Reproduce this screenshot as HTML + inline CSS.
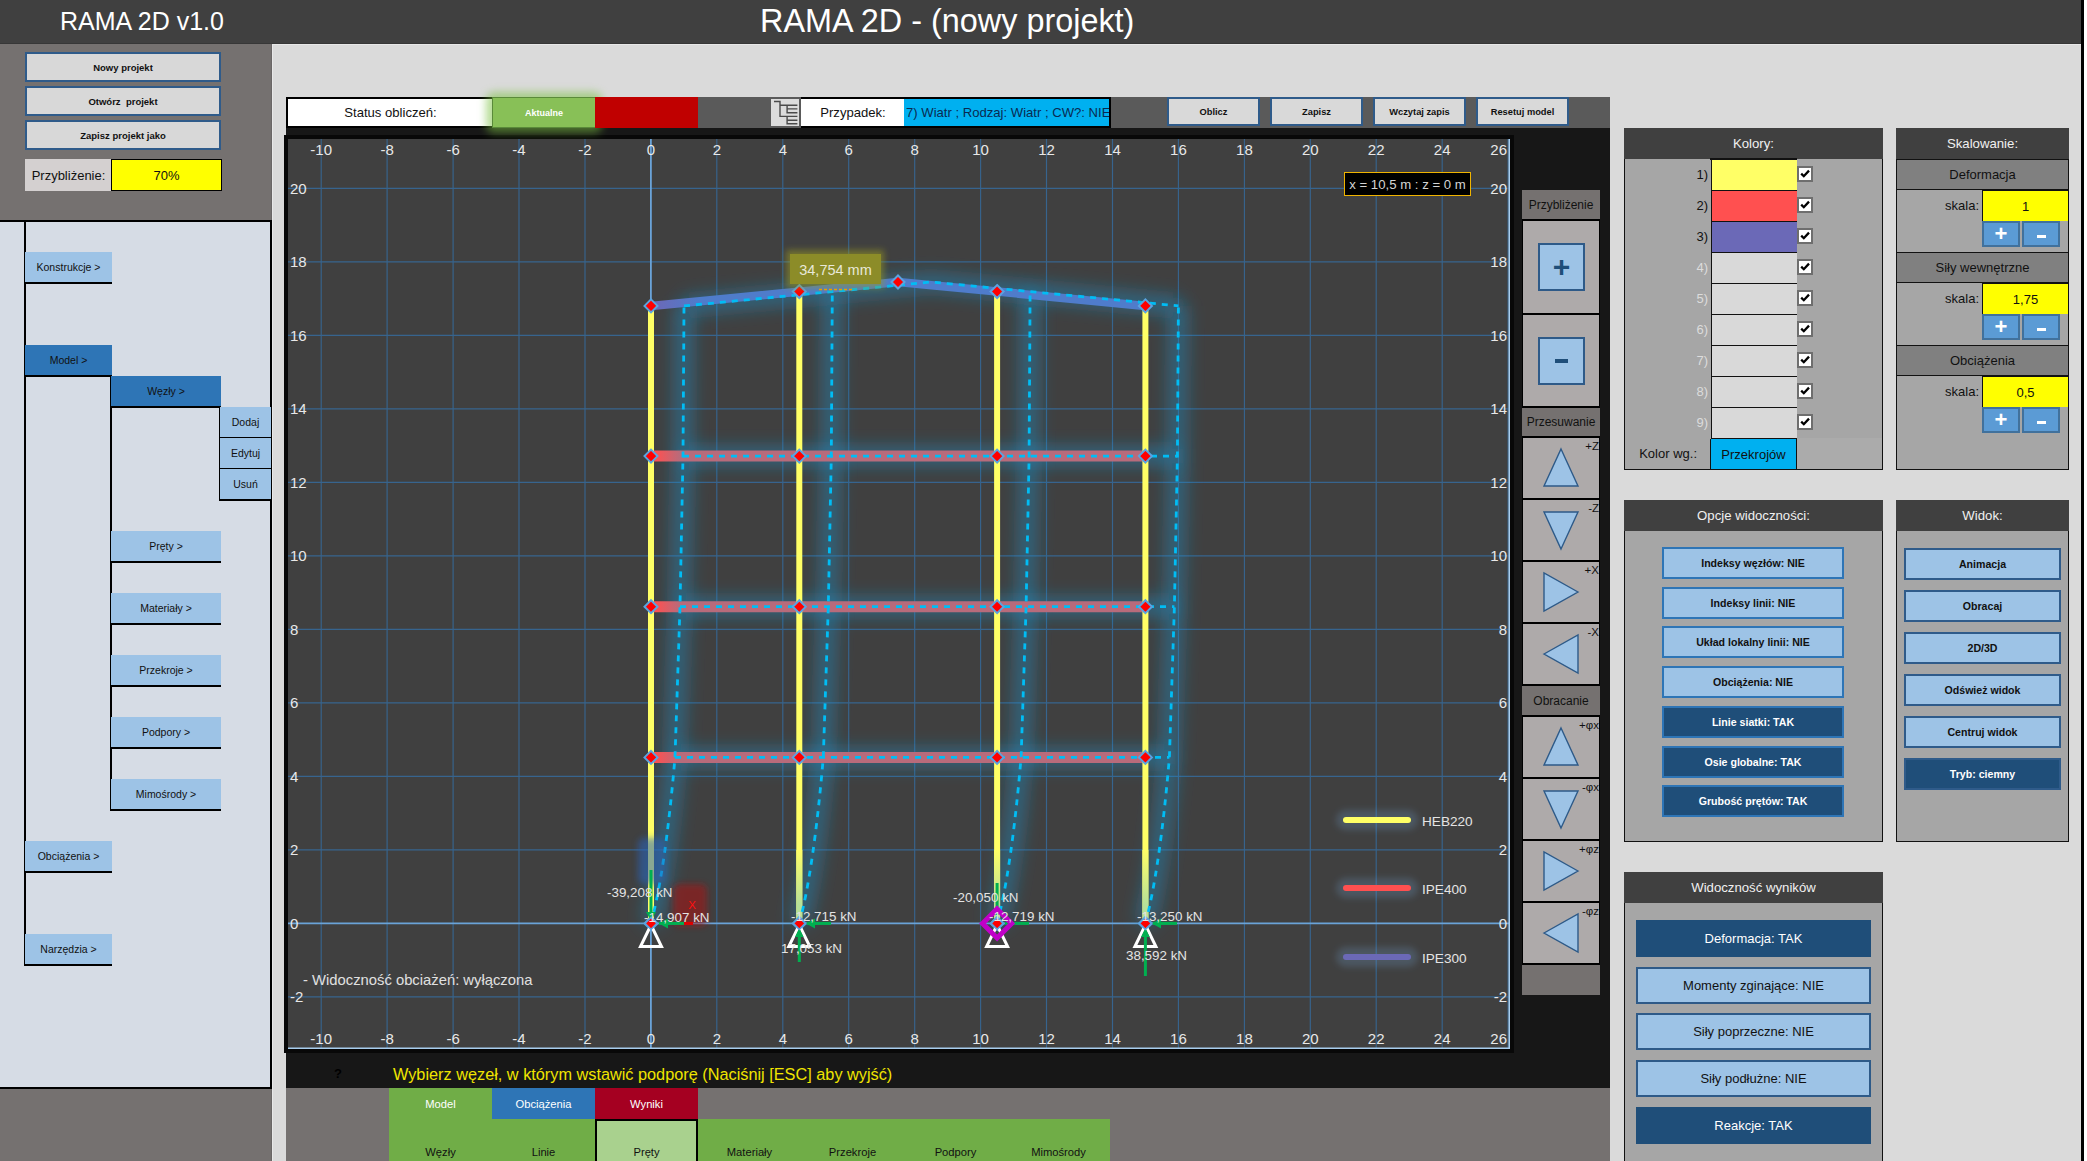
<!DOCTYPE html>
<html><head><meta charset="utf-8">
<style>
*{box-sizing:border-box;margin:0;padding:0}
html,body{width:2087px;height:1161px;overflow:hidden;background:#fff;font-family:"Liberation Sans",sans-serif}
.a{position:absolute}
.c{display:flex;align-items:center;justify-content:center;white-space:nowrap}
#hdr{left:0;top:0;width:2081px;height:44px;background:#404040;border-bottom:1px solid #373737}
#rstrip{left:2081px;top:0;width:3px;height:1161px;background:#000}
#main{left:272px;top:44px;width:1809px;height:1117px;background:#dadada;border-left:1px solid #e8e8e8;border-top:1px solid #e8e8e8}
#lp{left:0;top:44px;width:272px;height:1117px;background:#757170;border-right:1px solid #6a6666}
.lbtn{left:25px;width:196px;height:30px;background:#d8d8d8;border:2px solid #2f5b8a;font-size:9.5px;font-weight:700;color:#111}
#menu{left:0;top:220px;width:272px;height:869px;background:#d6dce5;border:2px solid #000;border-left:none}
.mi{background:#9dc3e6;font-size:10.5px;color:#111;border-bottom:2px solid #000;height:32px}
.mi.on{background:#2e75b6}
.vl{background:#000;width:2px}

.tbtn{top:97px;width:93px;height:29px;background:#d9d9d9;border:2px solid #2f5b8a;font-size:9.3px;font-weight:700;color:#111}
.nh{left:1522px;width:78px;background:#757170;font-size:12px;color:#111}
.nc{left:1523px;width:76px;background:#aeaaaa}
.pm{left:1538px;width:47px;height:48px;background:#9dc3e6;border:2px solid #2e5a88;font-size:30px;font-weight:700;color:#1f4e79;line-height:48px}
.tab{height:31px;font-size:11.2px;color:#fff}
.tab2{top:1143px;width:103px;text-align:center;font-size:11.2px;color:#111;line-height:18px}
.pnl{background:#a6a6a6;border:1.5px solid #111}
.ph{background:#404040;color:#f0f0f0;font-size:13.2px}
.chk{left:1797px;width:16px;height:16px;background:#fff;border:2px solid #6e6e6e}
.sh{left:1897px;width:171px;height:31px;background:#808080;font-size:13px;color:#111;border-bottom:1.5px solid #111;border-top:1.5px solid #111}
.sb{width:38px;height:26px;background:#5b9bd5;border:2px solid #41719c;color:#fff;font-size:22px;font-weight:700;line-height:26px}
.ob{height:32px;background:#9dc3e6;border:2px solid #2e75b6;font-size:10.6px;font-weight:700;color:#111}
.ob.dk{background:#1f4e79;color:#fff}
.ob.w{border-color:#2f5b8a}
.rb{left:1636px;width:235px;height:37px;background:#9dc3e6;border:2px solid #2e5a88;font-size:13px;color:#111}
.rb.dk{background:#1f4e79;border-color:#1f4e79;color:#fff}
</style></head><body>
<div id="hdr" class="a"></div>
<div class="a" style="left:60px;top:4px;width:166px;height:34px;color:#fff;font-size:25px;line-height:34px;white-space:nowrap">RAMA 2D v1.0</div>
<div class="a" style="left:760px;top:1px;width:378px;height:40px;color:#fff;font-size:32.4px;line-height:40px;white-space:nowrap">RAMA 2D - (nowy projekt)</div>
<div id="rstrip" class="a"></div>
<div id="lp" class="a"></div>
<div id="main" class="a"></div>

<!-- left panel buttons -->
<div class="a c lbtn" style="top:52px">Nowy projekt</div>
<div class="a c lbtn" style="top:86px">Otwórz&nbsp; projekt</div>
<div class="a c lbtn" style="top:120px">Zapisz projekt jako</div>
<div class="a c" style="left:25px;top:159px;width:87px;height:32px;background:#d4d0d0;font-size:13px;color:#111">Przybliżenie:</div>
<div class="a c" style="left:111px;top:159px;width:111px;height:32px;background:#ffff00;border:1px solid #000;font-size:13px;color:#111">70%</div>

<!-- left menu -->
<div id="menu" class="a"></div>
<div class="a vl" style="left:24px;top:222px;height:744px"></div>
<div class="a c mi" style="left:25px;top:252px;width:87px">Konstrukcje &gt;</div>
<div class="a c mi on" style="left:25px;top:345px;width:87px">Model &gt;</div>
<div class="a vl" style="left:110px;top:376px;height:435px"></div>
<div class="a c mi on" style="left:111px;top:376px;width:110px">Węzły &gt;</div>
<div class="a vl" style="left:219px;top:407px;height:94px"></div>
<div class="a c mi" style="left:220px;top:407px;width:51px;height:32px">Dodaj</div>
<div class="a c mi" style="left:220px;top:438px;width:51px;height:32px">Edytuj</div>
<div class="a c mi" style="left:220px;top:469px;width:51px;height:32px">Usuń</div>
<div class="a c mi" style="left:111px;top:531px;width:110px">Pręty &gt;</div>
<div class="a c mi" style="left:111px;top:593px;width:110px">Materiały &gt;</div>
<div class="a c mi" style="left:111px;top:655px;width:110px">Przekroje &gt;</div>
<div class="a c mi" style="left:111px;top:717px;width:110px">Podpory &gt;</div>
<div class="a c mi" style="left:111px;top:779px;width:110px">Mimośrody &gt;</div>
<div class="a c mi" style="left:25px;top:841px;width:87px">Obciążenia &gt;</div>
<div class="a c mi" style="left:25px;top:934px;width:87px">Narzędzia &gt;</div>

<!-- dark work area -->
<div class="a" style="left:286px;top:128px;width:1324px;height:961px;background:#171717"></div>
<div class="a" style="left:284px;top:135px;width:1230px;height:918px;background:#080808"></div>
<!-- toolbar -->
<div class="a" style="left:698px;top:97px;width:912px;height:31px;background:#5a5a5a"></div>
<div class="a c" style="left:286px;top:97px;width:207px;height:31px;background:#fff;border:2px solid #000;border-right:none;font-size:13.1px;color:#111">Status obliczeń:</div>
<div class="a" style="left:486px;top:92px;width:116px;height:41px;background:#7ac040;opacity:.55;filter:blur(4px);border-radius:8px"></div>
<div class="a c" style="left:492px;top:97px;width:104px;height:31px;background:#88c057;border:1px solid #5a8a3a;font-size:9px;font-weight:700;color:#fff">Aktualne</div>
<div class="a" style="left:595px;top:97px;width:103px;height:31px;background:#c00000"></div>
<!-- tree icon -->
<div class="a" style="left:771px;top:99px;width:28px;height:27px;background:#dcdcdc"></div>
<svg class="a" style="left:771px;top:98px" width="30" height="30" viewBox="0 0 30 30">
<path d="M3,3.5 H9 V18.4 H26.4 M9,7.3 H26.4 M16.1,7.3 V14.7 H26.4 M16.1,10.9 H26.4 M16.1,18.4 V25.8 H26.4 M16.1,22.2 H26.4" fill="none" stroke="#4a4a4a" stroke-width="1.4"/>
</svg>
<div class="a c" style="left:801px;top:97px;width:104px;height:31px;background:#fff;border-top:2px solid #000;border-bottom:2px solid #000;font-size:13.1px;color:#111">Przypadek:</div>
<div class="a" style="left:904px;top:97px;width:207px;height:31px;background:#00b0f0;border:2px solid #000;border-left:none;overflow:hidden;white-space:nowrap;font-size:13.1px;line-height:27px;color:#0a2a50;padding-left:2px">7) Wiatr ; Rodzaj: Wiatr ; CW?: NIE</div>
<div class="a c tbtn" style="left:1167px">Oblicz</div>
<div class="a c tbtn" style="left:1270px">Zapisz</div>
<div class="a c tbtn" style="left:1373px">Wczytaj zapis</div>
<div class="a c tbtn" style="left:1476px">Resetuj model</div>

<svg class="a" style="left:288px;top:139px" width="1222" height="910" viewBox="288 139 1222 910">
<defs><filter id="gl" filterUnits="userSpaceOnUse" x="288" y="139" width="1222" height="910"><feGaussianBlur stdDeviation="9"/></filter><filter id="gl2" filterUnits="userSpaceOnUse" x="288" y="139" width="1222" height="910"><feGaussianBlur stdDeviation="3"/></filter><linearGradient id="rg" gradientUnits="userSpaceOnUse" x1="655" x2="680" y1="0" y2="0"><stop offset="0" stop-color="#ff5050"/><stop offset="1" stop-color="#b86b7b"/></linearGradient><linearGradient id="pg" gradientUnits="userSpaceOnUse" x1="655" x2="700" y1="0" y2="0"><stop offset="0" stop-color="#6b69b7"/><stop offset="1" stop-color="#4f7ccb"/></linearGradient><linearGradient id="cg" gradientUnits="userSpaceOnUse" x1="0" x2="0" y1="850" y2="905"><stop offset="0" stop-color="#ffff66"/><stop offset="1" stop-color="#b6e09a"/></linearGradient></defs>
<rect x="288" y="139" width="1222" height="910" fill="#404040"/>
<line x1="321.2" y1="139" x2="321.2" y2="1049" stroke="#37648e" stroke-width="1.15"/>
<line x1="387.1" y1="139" x2="387.1" y2="1049" stroke="#37648e" stroke-width="1.15"/>
<line x1="453.1" y1="139" x2="453.1" y2="1049" stroke="#37648e" stroke-width="1.15"/>
<line x1="519.0" y1="139" x2="519.0" y2="1049" stroke="#37648e" stroke-width="1.15"/>
<line x1="585.0" y1="139" x2="585.0" y2="1049" stroke="#37648e" stroke-width="1.15"/>
<line x1="716.8" y1="139" x2="716.8" y2="1049" stroke="#37648e" stroke-width="1.15"/>
<line x1="782.8" y1="139" x2="782.8" y2="1049" stroke="#37648e" stroke-width="1.15"/>
<line x1="848.7" y1="139" x2="848.7" y2="1049" stroke="#37648e" stroke-width="1.15"/>
<line x1="914.7" y1="139" x2="914.7" y2="1049" stroke="#37648e" stroke-width="1.15"/>
<line x1="980.6" y1="139" x2="980.6" y2="1049" stroke="#37648e" stroke-width="1.15"/>
<line x1="1046.5" y1="139" x2="1046.5" y2="1049" stroke="#37648e" stroke-width="1.15"/>
<line x1="1112.5" y1="139" x2="1112.5" y2="1049" stroke="#37648e" stroke-width="1.15"/>
<line x1="1178.4" y1="139" x2="1178.4" y2="1049" stroke="#37648e" stroke-width="1.15"/>
<line x1="1244.4" y1="139" x2="1244.4" y2="1049" stroke="#37648e" stroke-width="1.15"/>
<line x1="1310.3" y1="139" x2="1310.3" y2="1049" stroke="#37648e" stroke-width="1.15"/>
<line x1="1376.2" y1="139" x2="1376.2" y2="1049" stroke="#37648e" stroke-width="1.15"/>
<line x1="1442.2" y1="139" x2="1442.2" y2="1049" stroke="#37648e" stroke-width="1.15"/>
<line x1="1508.1" y1="139" x2="1508.1" y2="1049" stroke="#37648e" stroke-width="1.15"/>
<line x1="288" y1="996.9" x2="1510" y2="996.9" stroke="#37648e" stroke-width="1.15"/>
<line x1="288" y1="849.9" x2="1510" y2="849.9" stroke="#37648e" stroke-width="1.15"/>
<line x1="288" y1="776.4" x2="1510" y2="776.4" stroke="#37648e" stroke-width="1.15"/>
<line x1="288" y1="702.9" x2="1510" y2="702.9" stroke="#37648e" stroke-width="1.15"/>
<line x1="288" y1="629.4" x2="1510" y2="629.4" stroke="#37648e" stroke-width="1.15"/>
<line x1="288" y1="555.9" x2="1510" y2="555.9" stroke="#37648e" stroke-width="1.15"/>
<line x1="288" y1="482.4" x2="1510" y2="482.4" stroke="#37648e" stroke-width="1.15"/>
<line x1="288" y1="408.9" x2="1510" y2="408.9" stroke="#37648e" stroke-width="1.15"/>
<line x1="288" y1="335.4" x2="1510" y2="335.4" stroke="#37648e" stroke-width="1.15"/>
<line x1="288" y1="261.9" x2="1510" y2="261.9" stroke="#37648e" stroke-width="1.15"/>
<line x1="288" y1="188.4" x2="1510" y2="188.4" stroke="#37648e" stroke-width="1.15"/>
<line x1="650.9" y1="139" x2="650.9" y2="1049" stroke="#6aa3d8" stroke-width="1.8"/>
<line x1="288" y1="923.4" x2="1510" y2="923.4" stroke="#6aa3d8" stroke-width="1.8"/>
<text x="321.2" y="154.5" font-family="Liberation Sans" font-size="15" fill="#e8e8e8" text-anchor="middle">-10</text>
<text x="321.2" y="1043.5" font-family="Liberation Sans" font-size="15" fill="#e8e8e8" text-anchor="middle">-10</text>
<text x="387.1" y="154.5" font-family="Liberation Sans" font-size="15" fill="#e8e8e8" text-anchor="middle">-8</text>
<text x="387.1" y="1043.5" font-family="Liberation Sans" font-size="15" fill="#e8e8e8" text-anchor="middle">-8</text>
<text x="453.1" y="154.5" font-family="Liberation Sans" font-size="15" fill="#e8e8e8" text-anchor="middle">-6</text>
<text x="453.1" y="1043.5" font-family="Liberation Sans" font-size="15" fill="#e8e8e8" text-anchor="middle">-6</text>
<text x="519.0" y="154.5" font-family="Liberation Sans" font-size="15" fill="#e8e8e8" text-anchor="middle">-4</text>
<text x="519.0" y="1043.5" font-family="Liberation Sans" font-size="15" fill="#e8e8e8" text-anchor="middle">-4</text>
<text x="585.0" y="154.5" font-family="Liberation Sans" font-size="15" fill="#e8e8e8" text-anchor="middle">-2</text>
<text x="585.0" y="1043.5" font-family="Liberation Sans" font-size="15" fill="#e8e8e8" text-anchor="middle">-2</text>
<text x="650.9" y="154.5" font-family="Liberation Sans" font-size="15" fill="#e8e8e8" text-anchor="middle">0</text>
<text x="650.9" y="1043.5" font-family="Liberation Sans" font-size="15" fill="#e8e8e8" text-anchor="middle">0</text>
<text x="716.8" y="154.5" font-family="Liberation Sans" font-size="15" fill="#e8e8e8" text-anchor="middle">2</text>
<text x="716.8" y="1043.5" font-family="Liberation Sans" font-size="15" fill="#e8e8e8" text-anchor="middle">2</text>
<text x="782.8" y="154.5" font-family="Liberation Sans" font-size="15" fill="#e8e8e8" text-anchor="middle">4</text>
<text x="782.8" y="1043.5" font-family="Liberation Sans" font-size="15" fill="#e8e8e8" text-anchor="middle">4</text>
<text x="848.7" y="154.5" font-family="Liberation Sans" font-size="15" fill="#e8e8e8" text-anchor="middle">6</text>
<text x="848.7" y="1043.5" font-family="Liberation Sans" font-size="15" fill="#e8e8e8" text-anchor="middle">6</text>
<text x="914.7" y="154.5" font-family="Liberation Sans" font-size="15" fill="#e8e8e8" text-anchor="middle">8</text>
<text x="914.7" y="1043.5" font-family="Liberation Sans" font-size="15" fill="#e8e8e8" text-anchor="middle">8</text>
<text x="980.6" y="154.5" font-family="Liberation Sans" font-size="15" fill="#e8e8e8" text-anchor="middle">10</text>
<text x="980.6" y="1043.5" font-family="Liberation Sans" font-size="15" fill="#e8e8e8" text-anchor="middle">10</text>
<text x="1046.5" y="154.5" font-family="Liberation Sans" font-size="15" fill="#e8e8e8" text-anchor="middle">12</text>
<text x="1046.5" y="1043.5" font-family="Liberation Sans" font-size="15" fill="#e8e8e8" text-anchor="middle">12</text>
<text x="1112.5" y="154.5" font-family="Liberation Sans" font-size="15" fill="#e8e8e8" text-anchor="middle">14</text>
<text x="1112.5" y="1043.5" font-family="Liberation Sans" font-size="15" fill="#e8e8e8" text-anchor="middle">14</text>
<text x="1178.4" y="154.5" font-family="Liberation Sans" font-size="15" fill="#e8e8e8" text-anchor="middle">16</text>
<text x="1178.4" y="1043.5" font-family="Liberation Sans" font-size="15" fill="#e8e8e8" text-anchor="middle">16</text>
<text x="1244.4" y="154.5" font-family="Liberation Sans" font-size="15" fill="#e8e8e8" text-anchor="middle">18</text>
<text x="1244.4" y="1043.5" font-family="Liberation Sans" font-size="15" fill="#e8e8e8" text-anchor="middle">18</text>
<text x="1310.3" y="154.5" font-family="Liberation Sans" font-size="15" fill="#e8e8e8" text-anchor="middle">20</text>
<text x="1310.3" y="1043.5" font-family="Liberation Sans" font-size="15" fill="#e8e8e8" text-anchor="middle">20</text>
<text x="1376.2" y="154.5" font-family="Liberation Sans" font-size="15" fill="#e8e8e8" text-anchor="middle">22</text>
<text x="1376.2" y="1043.5" font-family="Liberation Sans" font-size="15" fill="#e8e8e8" text-anchor="middle">22</text>
<text x="1442.2" y="154.5" font-family="Liberation Sans" font-size="15" fill="#e8e8e8" text-anchor="middle">24</text>
<text x="1442.2" y="1043.5" font-family="Liberation Sans" font-size="15" fill="#e8e8e8" text-anchor="middle">24</text>
<text x="1507" y="154.5" font-family="Liberation Sans" font-size="15" fill="#e8e8e8" text-anchor="end">26</text>
<text x="1507" y="1043.5" font-family="Liberation Sans" font-size="15" fill="#e8e8e8" text-anchor="end">26</text>
<text x="290" y="1002.4" font-family="Liberation Sans" font-size="15" fill="#e8e8e8">-2</text>
<text x="1507" y="1002.4" font-family="Liberation Sans" font-size="15" fill="#e8e8e8" text-anchor="end">-2</text>
<text x="290" y="928.9" font-family="Liberation Sans" font-size="15" fill="#e8e8e8">0</text>
<text x="1507" y="928.9" font-family="Liberation Sans" font-size="15" fill="#e8e8e8" text-anchor="end">0</text>
<text x="290" y="855.4" font-family="Liberation Sans" font-size="15" fill="#e8e8e8">2</text>
<text x="1507" y="855.4" font-family="Liberation Sans" font-size="15" fill="#e8e8e8" text-anchor="end">2</text>
<text x="290" y="781.9" font-family="Liberation Sans" font-size="15" fill="#e8e8e8">4</text>
<text x="1507" y="781.9" font-family="Liberation Sans" font-size="15" fill="#e8e8e8" text-anchor="end">4</text>
<text x="290" y="708.4" font-family="Liberation Sans" font-size="15" fill="#e8e8e8">6</text>
<text x="1507" y="708.4" font-family="Liberation Sans" font-size="15" fill="#e8e8e8" text-anchor="end">6</text>
<text x="290" y="634.9" font-family="Liberation Sans" font-size="15" fill="#e8e8e8">8</text>
<text x="1507" y="634.9" font-family="Liberation Sans" font-size="15" fill="#e8e8e8" text-anchor="end">8</text>
<text x="290" y="561.4" font-family="Liberation Sans" font-size="15" fill="#e8e8e8">10</text>
<text x="1507" y="561.4" font-family="Liberation Sans" font-size="15" fill="#e8e8e8" text-anchor="end">10</text>
<text x="290" y="487.9" font-family="Liberation Sans" font-size="15" fill="#e8e8e8">12</text>
<text x="1507" y="487.9" font-family="Liberation Sans" font-size="15" fill="#e8e8e8" text-anchor="end">12</text>
<text x="290" y="414.4" font-family="Liberation Sans" font-size="15" fill="#e8e8e8">14</text>
<text x="1507" y="414.4" font-family="Liberation Sans" font-size="15" fill="#e8e8e8" text-anchor="end">14</text>
<text x="290" y="340.9" font-family="Liberation Sans" font-size="15" fill="#e8e8e8">16</text>
<text x="1507" y="340.9" font-family="Liberation Sans" font-size="15" fill="#e8e8e8" text-anchor="end">16</text>
<text x="290" y="267.4" font-family="Liberation Sans" font-size="15" fill="#e8e8e8">18</text>
<text x="1507" y="267.4" font-family="Liberation Sans" font-size="15" fill="#e8e8e8" text-anchor="end">18</text>
<text x="290" y="193.9" font-family="Liberation Sans" font-size="15" fill="#e8e8e8">20</text>
<text x="1507" y="193.9" font-family="Liberation Sans" font-size="15" fill="#e8e8e8" text-anchor="end">20</text>
<path d="M651,923.4 Q665.3,870.2 675,757.4 L680,606.7 L683,456.1 L684,305.9" fill="none" stroke="#1c90c8" stroke-width="16" stroke-opacity="0.55" filter="url(#gl)"/>
<path d="M799.3,923.4 Q813.5999999999999,870.2 823.3,757.4 L828.3,606.7 L831.3,456.1 L832.3,291.6" fill="none" stroke="#1c90c8" stroke-width="16" stroke-opacity="0.55" filter="url(#gl)"/>
<path d="M997.1,923.4 Q1011.4,870.2 1021.1,757.4 L1026.1,606.7 L1029.1,456.1 L1030.1,291.6" fill="none" stroke="#1c90c8" stroke-width="16" stroke-opacity="0.55" filter="url(#gl)"/>
<path d="M1145.4,923.4 Q1159.7,870.2 1169.4,757.4 L1174.4,606.7 L1177.4,456.1 L1178.4,305.9" fill="none" stroke="#1c90c8" stroke-width="16" stroke-opacity="0.55" filter="url(#gl)"/>
<path d="M675,757.4 L1169.4,757.4" fill="none" stroke="#1c90c8" stroke-width="16" stroke-opacity="0.55" filter="url(#gl)"/>
<path d="M680,606.7 L1174.4,606.7" fill="none" stroke="#1c90c8" stroke-width="16" stroke-opacity="0.55" filter="url(#gl)"/>
<path d="M683,456.1 L1177.4,456.1" fill="none" stroke="#1c90c8" stroke-width="16" stroke-opacity="0.55" filter="url(#gl)"/>
<path d="M684,305.9 L832.3,291.6 L931,282 L1030.1,291.6 L1178.4,305.9" fill="none" stroke="#1c90c8" stroke-width="16" stroke-opacity="0.55" filter="url(#gl)"/>
<path d="M651,305.9 L898,282 L1145.4,305.9" fill="none" stroke="url(#pg)" stroke-width="8.5"/>
<line x1="651" y1="757.4" x2="1145.4" y2="757.4" stroke="url(#rg)" stroke-width="11"/>
<line x1="651" y1="606.7" x2="1145.4" y2="606.7" stroke="url(#rg)" stroke-width="11"/>
<line x1="651" y1="456.1" x2="1145.4" y2="456.1" stroke="url(#rg)" stroke-width="11"/>
<line x1="651" y1="923.4" x2="651" y2="305.9" stroke="#ffff66" stroke-width="6"/>
<line x1="799.3" y1="923.4" x2="799.3" y2="291.6" stroke="#ffff66" stroke-width="6"/>
<line x1="799.3" y1="918" x2="799.3" y2="850" stroke="url(#cg)" stroke-width="6"/>
<line x1="997.1" y1="923.4" x2="997.1" y2="291.6" stroke="#ffff66" stroke-width="6"/>
<line x1="997.1" y1="918" x2="997.1" y2="850" stroke="url(#cg)" stroke-width="6"/>
<line x1="1145.4" y1="923.4" x2="1145.4" y2="305.9" stroke="#ffff66" stroke-width="6"/>
<line x1="1145.4" y1="918" x2="1145.4" y2="850" stroke="url(#cg)" stroke-width="6"/>
<path d="M651,923.4 Q665.3,870.2 675,757.4 L680,606.7 L683,456.1 L684,305.9" fill="none" stroke="#00bdf5" stroke-width="2.8" stroke-dasharray="6 6"/>
<path d="M799.3,923.4 Q813.5999999999999,870.2 823.3,757.4 L828.3,606.7 L831.3,456.1 L832.3,291.6" fill="none" stroke="#00bdf5" stroke-width="2.8" stroke-dasharray="6 6"/>
<path d="M997.1,923.4 Q1011.4,870.2 1021.1,757.4 L1026.1,606.7 L1029.1,456.1 L1030.1,291.6" fill="none" stroke="#00bdf5" stroke-width="2.8" stroke-dasharray="6 6"/>
<path d="M1145.4,923.4 Q1159.7,870.2 1169.4,757.4 L1174.4,606.7 L1177.4,456.1 L1178.4,305.9" fill="none" stroke="#00bdf5" stroke-width="2.8" stroke-dasharray="6 6"/>
<path d="M675,757.4 L1169.4,757.4" fill="none" stroke="#00bdf5" stroke-width="2.8" stroke-dasharray="6 6"/>
<path d="M680,606.7 L1174.4,606.7" fill="none" stroke="#00bdf5" stroke-width="2.8" stroke-dasharray="6 6"/>
<path d="M683,456.1 L1177.4,456.1" fill="none" stroke="#00bdf5" stroke-width="2.8" stroke-dasharray="6 6"/>
<path d="M684,305.9 L832.3,291.6 L931,282 L1030.1,291.6 L1178.4,305.9" fill="none" stroke="#00bdf5" stroke-width="2.8" stroke-dasharray="6 6"/>
<path d="M651,916.9 L657.5,923.4 L651,929.9 L644.5,923.4 Z" fill="#ff0000" stroke="#5ba3e0" stroke-width="2"/>
<path d="M651,750.9 L657.5,757.4 L651,763.9 L644.5,757.4 Z" fill="#ff0000" stroke="#5ba3e0" stroke-width="2"/>
<path d="M651,600.2 L657.5,606.7 L651,613.2 L644.5,606.7 Z" fill="#ff0000" stroke="#5ba3e0" stroke-width="2"/>
<path d="M651,449.6 L657.5,456.1 L651,462.6 L644.5,456.1 Z" fill="#ff0000" stroke="#5ba3e0" stroke-width="2"/>
<path d="M651,299.4 L657.5,305.9 L651,312.4 L644.5,305.9 Z" fill="#ff0000" stroke="#5ba3e0" stroke-width="2"/>
<path d="M799.3,916.9 L805.8,923.4 L799.3,929.9 L792.8,923.4 Z" fill="#ff0000" stroke="#5ba3e0" stroke-width="2"/>
<path d="M799.3,750.9 L805.8,757.4 L799.3,763.9 L792.8,757.4 Z" fill="#ff0000" stroke="#5ba3e0" stroke-width="2"/>
<path d="M799.3,600.2 L805.8,606.7 L799.3,613.2 L792.8,606.7 Z" fill="#ff0000" stroke="#5ba3e0" stroke-width="2"/>
<path d="M799.3,449.6 L805.8,456.1 L799.3,462.6 L792.8,456.1 Z" fill="#ff0000" stroke="#5ba3e0" stroke-width="2"/>
<path d="M799.3,285.05032388663966 L805.8,291.55032388663966 L799.3,298.05032388663966 L792.8,291.55032388663966 Z" fill="#ff0000" stroke="#5ba3e0" stroke-width="2"/>
<path d="M997.1,916.9 L1003.6,923.4 L997.1,929.9 L990.6,923.4 Z" fill="#ff0000" stroke="#5ba3e0" stroke-width="2"/>
<path d="M997.1,750.9 L1003.6,757.4 L997.1,763.9 L990.6,757.4 Z" fill="#ff0000" stroke="#5ba3e0" stroke-width="2"/>
<path d="M997.1,600.2 L1003.6,606.7 L997.1,613.2 L990.6,606.7 Z" fill="#ff0000" stroke="#5ba3e0" stroke-width="2"/>
<path d="M997.1,449.6 L1003.6,456.1 L997.1,462.6 L990.6,456.1 Z" fill="#ff0000" stroke="#5ba3e0" stroke-width="2"/>
<path d="M997.1,285.07352465642686 L1003.6,291.57352465642686 L997.1,298.07352465642686 L990.6,291.57352465642686 Z" fill="#ff0000" stroke="#5ba3e0" stroke-width="2"/>
<path d="M1145.4,916.9 L1151.9,923.4 L1145.4,929.9 L1138.9,923.4 Z" fill="#ff0000" stroke="#5ba3e0" stroke-width="2"/>
<path d="M1145.4,750.9 L1151.9,757.4 L1145.4,763.9 L1138.9,757.4 Z" fill="#ff0000" stroke="#5ba3e0" stroke-width="2"/>
<path d="M1145.4,600.2 L1151.9,606.7 L1145.4,613.2 L1138.9,606.7 Z" fill="#ff0000" stroke="#5ba3e0" stroke-width="2"/>
<path d="M1145.4,449.6 L1151.9,456.1 L1145.4,462.6 L1138.9,456.1 Z" fill="#ff0000" stroke="#5ba3e0" stroke-width="2"/>
<path d="M1145.4,299.4 L1151.9,305.9 L1145.4,312.4 L1138.9,305.9 Z" fill="#ff0000" stroke="#5ba3e0" stroke-width="2"/>
<path d="M898,275.5 L904.5,282 L898,288.5 L891.5,282 Z" fill="#ff0000" stroke="#5ba3e0" stroke-width="2"/>
<rect x="638" y="838" width="28" height="46" rx="6" fill="#2a62b8" opacity="0.55" filter="url(#gl2)"/>
<rect x="673" y="884" width="34" height="42" rx="6" fill="#a01818" opacity="0.6" filter="url(#gl2)"/>
<text x="692" y="908.5" font-family="Liberation Sans" font-size="11.5" fill="#ff1010" text-anchor="middle">X</text>
<path d="M651,925 L661.5,946.5 L640.5,946.5 Z" fill="none" stroke="#ffffff" stroke-width="3" stroke-linejoin="miter"/>
<path d="M799.3,925 L809.8,946.5 L788.8,946.5 Z" fill="none" stroke="#ffffff" stroke-width="3" stroke-linejoin="miter"/>
<path d="M997.1,925 L1007.6,946.5 L986.6,946.5 Z" fill="none" stroke="#ffffff" stroke-width="3" stroke-linejoin="miter"/>
<path d="M1145.4,925 L1155.9,946.5 L1134.9,946.5 Z" fill="none" stroke="#ffffff" stroke-width="3" stroke-linejoin="miter"/>
<line x1="651" y1="870" x2="651" y2="915" stroke="#00b050" stroke-width="3"/><path d="M646,912 L656,912 L651,921 Z" fill="#00b050"/>
<line x1="659" y1="923.4" x2="684" y2="923.4" stroke="#00b050" stroke-width="3"/><path d="M668,918.5 L668,928.5 L659,923.4 Z" fill="#00b050"/><line x1="684" y1="923.4" x2="693" y2="923.4" stroke="#e00000" stroke-width="3"/>
<line x1="799.3" y1="962" x2="799.3" y2="932" stroke="#00b050" stroke-width="3"/><path d="M795,937 L803.6,937 L799.3,928 Z" fill="#00b050"/>
<line x1="807" y1="923.4" x2="831" y2="923.4" stroke="#00b050" stroke-width="3"/><path d="M815,918.5 L815,928.5 L806,923.4 Z" fill="#00b050"/>
<line x1="997.1" y1="883" x2="997.1" y2="915" stroke="#00b050" stroke-width="3"/>
<line x1="1005" y1="923.4" x2="1029" y2="923.4" stroke="#00b050" stroke-width="3"/>
<line x1="1145.4" y1="976" x2="1145.4" y2="932" stroke="#00b050" stroke-width="3"/><path d="M1141,937 L1149.8,937 L1145.4,928 Z" fill="#00b050"/>
<line x1="1153" y1="923.4" x2="1177" y2="923.4" stroke="#00b050" stroke-width="3"/><path d="M1161,918.5 L1161,928.5 L1152,923.4 Z" fill="#00b050"/>
<path d="M651,917.4 L657,923.4 L651,929.4 L645,923.4 Z" fill="#ff0000" stroke="#5ba3e0" stroke-width="1.6"/>
<path d="M799.3,917.4 L805.3,923.4 L799.3,929.4 L793.3,923.4 Z" fill="#ff0000" stroke="#5ba3e0" stroke-width="1.6"/>
<path d="M997.1,917.4 L1003.1,923.4 L997.1,929.4 L991.1,923.4 Z" fill="#ff0000" stroke="#5ba3e0" stroke-width="1.6"/>
<path d="M1145.4,917.4 L1151.4,923.4 L1145.4,929.4 L1139.4,923.4 Z" fill="#ff0000" stroke="#5ba3e0" stroke-width="1.6"/>
<path d="M997.1,908.9 L1011.6,923.4 L997.1,937.9 L982.6,923.4 Z" fill="none" stroke="#c000c8" stroke-width="5"/>
<text x="607" y="896.8" font-family="Liberation Sans" font-size="13.4" fill="#e4e4e4">-39,208 kN</text>
<text x="644" y="921.8" font-family="Liberation Sans" font-size="13.4" fill="#e4e4e4">-14,907 kN</text>
<text x="791" y="921.3" font-family="Liberation Sans" font-size="13.4" fill="#e4e4e4">-12,715 kN</text>
<text x="781" y="952.8" font-family="Liberation Sans" font-size="13.4" fill="#e4e4e4">17,053 kN</text>
<text x="953" y="902.3" font-family="Liberation Sans" font-size="13.4" fill="#e4e4e4">-20,050 kN</text>
<text x="989" y="921.3" font-family="Liberation Sans" font-size="13.4" fill="#e4e4e4">-12,719 kN</text>
<text x="1137" y="921.3" font-family="Liberation Sans" font-size="13.4" fill="#e4e4e4">-13,250 kN</text>
<text x="1126" y="960.3" font-family="Liberation Sans" font-size="13.4" fill="#e4e4e4">38,592 kN</text>
<rect x="786" y="250" width="98" height="38" fill="#9a9a20" opacity="0.55" filter="url(#gl2)"/>
<rect x="790" y="254" width="91" height="30" fill="#8c8c28"/>
<text x="835.5" y="274.5" font-family="Liberation Sans" font-size="14.5" fill="#e8e8d8" text-anchor="middle">34,754 mm</text>
<line x1="819" y1="289.5" x2="852" y2="289.5" stroke="#e8a000" stroke-width="1.5" stroke-dasharray="3 2"/>
<line x1="1346" y1="820" x2="1408" y2="820" stroke="#6a9ac8" stroke-opacity="0.25" stroke-width="20" stroke-linecap="round" filter="url(#gl2)"/>
<line x1="1346" y1="820" x2="1408" y2="820" stroke="#ffff66" stroke-width="6" stroke-linecap="round"/>
<text x="1422" y="825.5" font-family="Liberation Sans" font-size="13.6" fill="#e4e4e4">HEB220</text>
<line x1="1346" y1="888" x2="1408" y2="888" stroke="#6a9ac8" stroke-opacity="0.25" stroke-width="20" stroke-linecap="round" filter="url(#gl2)"/>
<line x1="1346" y1="888" x2="1408" y2="888" stroke="#ff5050" stroke-width="6" stroke-linecap="round"/>
<text x="1422" y="893.5" font-family="Liberation Sans" font-size="13.6" fill="#e4e4e4">IPE400</text>
<line x1="1346" y1="957" x2="1408" y2="957" stroke="#6a9ac8" stroke-opacity="0.25" stroke-width="20" stroke-linecap="round" filter="url(#gl2)"/>
<line x1="1346" y1="957" x2="1408" y2="957" stroke="#6b69b7" stroke-width="6" stroke-linecap="round"/>
<text x="1422" y="962.5" font-family="Liberation Sans" font-size="13.6" fill="#e4e4e4">IPE300</text>
<text x="303" y="985" font-family="Liberation Sans" font-size="14.8" fill="#e0e0e0">- Widoczność obciażeń: wyłączona</text>
<rect x="1508.5" y="139" width="1.5" height="910" fill="#a8cdee"/>
<rect x="288" y="1047.5" width="1222" height="1.5" fill="#a8cdee"/>
</svg>
<!-- coords box -->
<div class="a c" style="left:1344px;top:172px;width:127px;height:24px;background:#000;border:1.5px solid #f0b400;font-size:13.2px;color:#d4d4d4">x = 10,5 m : z = 0 m</div>
<!-- nav column -->
<div class="a" style="left:1522px;top:219px;width:78px;height:746px;background:#000"></div>
<div class="a c nh" style="top:190px;height:29px">Przybliżenie</div>
<div class="a nc" style="top:221px;height:92px"></div>
<div class="a c pm" style="top:243px">+</div>
<div class="a nc" style="top:315px;height:91px"></div>
<div class="a c pm" style="top:337px"><span style="display:block;width:13px;height:4px;background:#1f4e79"></span></div>
<div class="a c nh" style="top:408px;height:28px">Przesuwanie</div>
<div class="a nc" style="top:438px;height:60px"></div>
<svg class="a" style="left:1540px;top:445px;overflow:visible" width="42" height="46" viewBox="1540 445 42 46"><path d="M1561,449 L1578,486 L1544,486 Z" fill="#9dc3e6" stroke="#2e5a88" stroke-width="1.4"/></svg>
<div class="a" style="left:1560px;top:439px;width:39px;text-align:right;font-size:11.5px;color:#111;line-height:14px">+Z</div>
<div class="a nc" style="top:500px;height:60px"></div>
<svg class="a" style="left:1540px;top:507px;overflow:visible" width="42" height="46" viewBox="1540 507 42 46"><path d="M1561,549 L1578,512 L1544,512 Z" fill="#9dc3e6" stroke="#2e5a88" stroke-width="1.4"/></svg>
<div class="a" style="left:1560px;top:501px;width:39px;text-align:right;font-size:11.5px;color:#111;line-height:14px">-Z</div>
<div class="a nc" style="top:562px;height:60px"></div>
<svg class="a" style="left:1540px;top:569px;overflow:visible" width="42" height="46" viewBox="1540 569 42 46"><path d="M1578,592 L1544,573 L1544,611 Z" fill="#9dc3e6" stroke="#2e5a88" stroke-width="1.4"/></svg>
<div class="a" style="left:1560px;top:563px;width:39px;text-align:right;font-size:11.5px;color:#111;line-height:14px">+X</div>
<div class="a nc" style="top:624px;height:60px"></div>
<svg class="a" style="left:1540px;top:631px;overflow:visible" width="42" height="46" viewBox="1540 631 42 46"><path d="M1544,654 L1578,635 L1578,673 Z" fill="#9dc3e6" stroke="#2e5a88" stroke-width="1.4"/></svg>
<div class="a" style="left:1560px;top:625px;width:39px;text-align:right;font-size:11.5px;color:#111;line-height:14px">-X</div>
<div class="a nc" style="top:717px;height:60px"></div>
<svg class="a" style="left:1540px;top:724px;overflow:visible" width="42" height="46" viewBox="1540 724 42 46"><path d="M1561,728 L1578,765 L1544,765 Z" fill="#9dc3e6" stroke="#2e5a88" stroke-width="1.4"/></svg>
<div class="a" style="left:1560px;top:718px;width:39px;text-align:right;font-size:11.5px;color:#111;line-height:14px">+φx</div>
<div class="a nc" style="top:779px;height:60px"></div>
<svg class="a" style="left:1540px;top:786px;overflow:visible" width="42" height="46" viewBox="1540 786 42 46"><path d="M1561,828 L1578,791 L1544,791 Z" fill="#9dc3e6" stroke="#2e5a88" stroke-width="1.4"/></svg>
<div class="a" style="left:1560px;top:780px;width:39px;text-align:right;font-size:11.5px;color:#111;line-height:14px">-φx</div>
<div class="a nc" style="top:841px;height:60px"></div>
<svg class="a" style="left:1540px;top:848px;overflow:visible" width="42" height="46" viewBox="1540 848 42 46"><path d="M1578,871 L1544,852 L1544,890 Z" fill="#9dc3e6" stroke="#2e5a88" stroke-width="1.4"/></svg>
<div class="a" style="left:1560px;top:842px;width:39px;text-align:right;font-size:11.5px;color:#111;line-height:14px">+φz</div>
<div class="a nc" style="top:903px;height:60px"></div>
<svg class="a" style="left:1540px;top:910px;overflow:visible" width="42" height="46" viewBox="1540 910 42 46"><path d="M1544,933 L1578,914 L1578,952 Z" fill="#9dc3e6" stroke="#2e5a88" stroke-width="1.4"/></svg>
<div class="a" style="left:1560px;top:904px;width:39px;text-align:right;font-size:11.5px;color:#111;line-height:14px">-φz</div>
<div class="a c nh" style="top:686px;height:29px">Obracanie</div>
<div class="a" style="left:1522px;top:965px;width:78px;height:30px;background:#757170"></div>
<!-- message bar + tabs -->
<div class="a" style="left:286px;top:1088px;width:1324px;height:73px;background:#757170"></div>
<div class="a" style="left:334px;top:1066px;font-size:13px;color:#000;font-weight:700">?</div>
<div class="a" style="left:393px;top:1063px;width:502px;font-size:16.3px;line-height:22px;color:#f0e400;white-space:nowrap">Wybierz węzeł, w którym wstawić podporę (Naciśnij [ESC] aby wyjść)</div>
<div class="a c tab" style="left:389px;top:1088px;width:103px;background:#70ad47">Model</div>
<div class="a c tab" style="left:492px;top:1088px;width:103px;background:#2e75b6">Obciążenia</div>
<div class="a c tab" style="left:595px;top:1088px;width:103px;background:#a50021">Wyniki</div>
<div class="a" style="left:389px;top:1119px;width:721px;height:42px;background:#70ad47"></div>
<div class="a" style="left:595px;top:1119px;width:103px;height:42px;background:#a9d18e;border:2px solid #000;border-bottom:none"></div>
<div class="a tab2" style="left:389px">Węzły</div>
<div class="a tab2" style="left:492px">Linie</div>
<div class="a tab2" style="left:595px">Pręty</div>
<div class="a tab2" style="left:698px">Materiały</div>
<div class="a tab2" style="left:801px">Przekroje</div>
<div class="a tab2" style="left:904px">Podpory</div>
<div class="a tab2" style="left:1007px">Mimośrody</div>


<div class="a pnl" style="left:1624px;top:128px;width:259px;height:342px"></div>
<div class="a c ph" style="left:1624px;top:128px;width:259px;height:31px">Kolory:</div>
<div class="a" style="left:1710px;top:158px;width:87px;height:1.5px;background:#111"></div>
<div class="a" style="left:1624px;top:159px;width:86px;height:31px;text-align:right;padding-right:2px;font-size:13px;line-height:31px;color:#111">1)</div>
<div class="a" style="left:1711px;top:160px;width:86px;height:31px;background:#ffff66;border-bottom:1.5px solid #111;border-left:1px solid #111"></div>
<div class="a chk" style="top:166px"><svg width="12" height="12" viewBox="0 0 12 12" style="position:absolute;left:0;top:0"><path d="M2.2,5.6 L4.8,8.2 L10,2.6" fill="none" stroke="#000" stroke-width="2.3"/></svg></div>
<div class="a" style="left:1624px;top:190px;width:86px;height:31px;text-align:right;padding-right:2px;font-size:13px;line-height:31px;color:#111">2)</div>
<div class="a" style="left:1711px;top:191px;width:86px;height:31px;background:#ff5050;border-bottom:1.5px solid #111;border-left:1px solid #111"></div>
<div class="a chk" style="top:197px"><svg width="12" height="12" viewBox="0 0 12 12" style="position:absolute;left:0;top:0"><path d="M2.2,5.6 L4.8,8.2 L10,2.6" fill="none" stroke="#000" stroke-width="2.3"/></svg></div>
<div class="a" style="left:1624px;top:221px;width:86px;height:31px;text-align:right;padding-right:2px;font-size:13px;line-height:31px;color:#111">3)</div>
<div class="a" style="left:1711px;top:222px;width:86px;height:31px;background:#6b69b7;border-bottom:1.5px solid #111;border-left:1px solid #111"></div>
<div class="a chk" style="top:228px"><svg width="12" height="12" viewBox="0 0 12 12" style="position:absolute;left:0;top:0"><path d="M2.2,5.6 L4.8,8.2 L10,2.6" fill="none" stroke="#000" stroke-width="2.3"/></svg></div>
<div class="a" style="left:1624px;top:252px;width:86px;height:31px;text-align:right;padding-right:2px;font-size:13px;line-height:31px;color:#dcdcdc">4)</div>
<div class="a" style="left:1711px;top:253px;width:86px;height:31px;background:#d9d9d9;border-bottom:1.5px solid #111;border-left:1px solid #111"></div>
<div class="a chk" style="top:259px"><svg width="12" height="12" viewBox="0 0 12 12" style="position:absolute;left:0;top:0"><path d="M2.2,5.6 L4.8,8.2 L10,2.6" fill="none" stroke="#000" stroke-width="2.3"/></svg></div>
<div class="a" style="left:1624px;top:283px;width:86px;height:31px;text-align:right;padding-right:2px;font-size:13px;line-height:31px;color:#dcdcdc">5)</div>
<div class="a" style="left:1711px;top:284px;width:86px;height:31px;background:#d9d9d9;border-bottom:1.5px solid #111;border-left:1px solid #111"></div>
<div class="a chk" style="top:290px"><svg width="12" height="12" viewBox="0 0 12 12" style="position:absolute;left:0;top:0"><path d="M2.2,5.6 L4.8,8.2 L10,2.6" fill="none" stroke="#000" stroke-width="2.3"/></svg></div>
<div class="a" style="left:1624px;top:314px;width:86px;height:31px;text-align:right;padding-right:2px;font-size:13px;line-height:31px;color:#dcdcdc">6)</div>
<div class="a" style="left:1711px;top:315px;width:86px;height:31px;background:#d9d9d9;border-bottom:1.5px solid #111;border-left:1px solid #111"></div>
<div class="a chk" style="top:321px"><svg width="12" height="12" viewBox="0 0 12 12" style="position:absolute;left:0;top:0"><path d="M2.2,5.6 L4.8,8.2 L10,2.6" fill="none" stroke="#000" stroke-width="2.3"/></svg></div>
<div class="a" style="left:1624px;top:345px;width:86px;height:31px;text-align:right;padding-right:2px;font-size:13px;line-height:31px;color:#dcdcdc">7)</div>
<div class="a" style="left:1711px;top:346px;width:86px;height:31px;background:#d9d9d9;border-bottom:1.5px solid #111;border-left:1px solid #111"></div>
<div class="a chk" style="top:352px"><svg width="12" height="12" viewBox="0 0 12 12" style="position:absolute;left:0;top:0"><path d="M2.2,5.6 L4.8,8.2 L10,2.6" fill="none" stroke="#000" stroke-width="2.3"/></svg></div>
<div class="a" style="left:1624px;top:376px;width:86px;height:31px;text-align:right;padding-right:2px;font-size:13px;line-height:31px;color:#dcdcdc">8)</div>
<div class="a" style="left:1711px;top:377px;width:86px;height:31px;background:#d9d9d9;border-bottom:1.5px solid #111;border-left:1px solid #111"></div>
<div class="a chk" style="top:383px"><svg width="12" height="12" viewBox="0 0 12 12" style="position:absolute;left:0;top:0"><path d="M2.2,5.6 L4.8,8.2 L10,2.6" fill="none" stroke="#000" stroke-width="2.3"/></svg></div>
<div class="a" style="left:1624px;top:407px;width:86px;height:31px;text-align:right;padding-right:2px;font-size:13px;line-height:31px;color:#dcdcdc">9)</div>
<div class="a" style="left:1711px;top:408px;width:86px;height:31px;background:#d9d9d9;border-bottom:1.5px solid #111;border-left:1px solid #111"></div>
<div class="a chk" style="top:414px"><svg width="12" height="12" viewBox="0 0 12 12" style="position:absolute;left:0;top:0"><path d="M2.2,5.6 L4.8,8.2 L10,2.6" fill="none" stroke="#000" stroke-width="2.3"/></svg></div>
<div class="a" style="left:1624px;top:438px;width:86px;height:31px;font-size:13px;line-height:31px;color:#111;text-align:right;padding-right:13px">Kolor wg.:</div>
<div class="a c" style="left:1710px;top:439px;width:87px;height:30px;background:#00b0f0;border-left:1px solid #111;border-right:1px solid #111;font-size:13px;color:#111">Przekrojów</div>
<div class="a" style="left:1797px;top:438px;width:85px;height:31px;background:#ababab"></div>
<div class="a pnl" style="left:1896px;top:128px;width:173px;height:342px"></div>
<div class="a c ph" style="left:1896px;top:128px;width:173px;height:31px">Skalowanie:</div>
<div class="a c sh" style="top:159px">Deformacja</div>
<div class="a" style="left:1897px;top:190px;width:82px;height:31px;text-align:right;font-size:13px;line-height:31px;color:#111">skala:</div>
<div class="a c" style="left:1982px;top:190px;width:86px;height:31px;background:#ffff00;border-top:1.5px solid #111;border-left:1px solid #111;font-size:13px;color:#111">1</div>
<div class="a c sb" style="left:1982px;top:221px">+</div>
<div class="a c sb" style="left:2022px;top:221px"><span style="display:block;width:9px;height:3px;background:#fff;margin-top:5px"></span></div>
<div class="a c sh" style="top:252px">Siły wewnętrzne</div>
<div class="a" style="left:1897px;top:283px;width:82px;height:31px;text-align:right;font-size:13px;line-height:31px;color:#111">skala:</div>
<div class="a c" style="left:1982px;top:283px;width:86px;height:31px;background:#ffff00;border-top:1.5px solid #111;border-left:1px solid #111;font-size:13px;color:#111">1,75</div>
<div class="a c sb" style="left:1982px;top:314px">+</div>
<div class="a c sb" style="left:2022px;top:314px"><span style="display:block;width:9px;height:3px;background:#fff;margin-top:5px"></span></div>
<div class="a c sh" style="top:345px">Obciążenia</div>
<div class="a" style="left:1897px;top:376px;width:82px;height:31px;text-align:right;font-size:13px;line-height:31px;color:#111">skala:</div>
<div class="a c" style="left:1982px;top:376px;width:86px;height:31px;background:#ffff00;border-top:1.5px solid #111;border-left:1px solid #111;font-size:13px;color:#111">0,5</div>
<div class="a c sb" style="left:1982px;top:407px">+</div>
<div class="a c sb" style="left:2022px;top:407px"><span style="display:block;width:9px;height:3px;background:#fff;margin-top:5px"></span></div>
<div class="a pnl" style="left:1624px;top:500px;width:259px;height:342px"></div>
<div class="a c ph" style="left:1624px;top:500px;width:259px;height:31px">Opcje widoczności:</div>
<div class="a c ob" style="left:1662px;top:547.0px;width:182px">Indeksy węzłów: NIE</div>
<div class="a c ob" style="left:1662px;top:586.7px;width:182px">Indeksy linii: NIE</div>
<div class="a c ob" style="left:1662px;top:626.4px;width:182px">Układ lokalny linii: NIE</div>
<div class="a c ob" style="left:1662px;top:666.1px;width:182px">Obciążenia: NIE</div>
<div class="a c ob dk" style="left:1662px;top:705.8px;width:182px">Linie siatki: TAK</div>
<div class="a c ob dk" style="left:1662px;top:745.5px;width:182px">Osie globalne: TAK</div>
<div class="a c ob dk" style="left:1662px;top:785.2px;width:182px">Grubość prętów: TAK</div>
<div class="a pnl" style="left:1896px;top:500px;width:173px;height:342px"></div>
<div class="a c ph" style="left:1896px;top:500px;width:173px;height:31px">Widok:</div>
<div class="a c ob w" style="left:1904px;top:548px;width:157px">Animacja</div>
<div class="a c ob w" style="left:1904px;top:590px;width:157px">Obracaj</div>
<div class="a c ob w" style="left:1904px;top:632px;width:157px">2D/3D</div>
<div class="a c ob w" style="left:1904px;top:674px;width:157px">Odśwież widok</div>
<div class="a c ob w" style="left:1904px;top:716px;width:157px">Centruj widok</div>
<div class="a c ob dk w" style="left:1904px;top:758px;width:157px">Tryb: ciemny</div>
<div class="a pnl" style="left:1624px;top:872px;width:259px;height:300px"></div>
<div class="a c ph" style="left:1624px;top:872px;width:259px;height:31px">Widoczność wyników</div>
<div class="a c rb dk" style="top:920.0px">Deformacja: TAK</div>
<div class="a c rb" style="top:966.7px">Momenty zginające: NIE</div>
<div class="a c rb" style="top:1013.4px">Siły poprzeczne: NIE</div>
<div class="a c rb" style="top:1060.1px">Siły podłużne: NIE</div>
<div class="a c rb dk" style="top:1106.8px">Reakcje: TAK</div>


</body></html>
